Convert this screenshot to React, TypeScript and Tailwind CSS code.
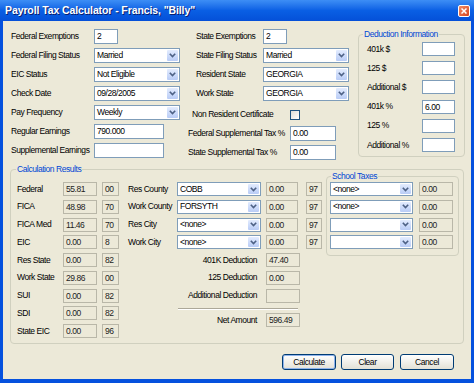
// Payroll Tax Calculator — XP style dialog
import type { ReactNode } from 'react'

const Chevron = () => (
  <svg width="7" height="5" viewBox="0 0 7 5">
    <path d="M0.8 0.8 L3.5 3.6 L6.2 0.8" fill="none" stroke="#4D6185" strokeWidth="1.6" />
  </svg>
)

interface BoxProps {
  value?: string
  w: string
}

const TextBox = ({ value = '', w }: BoxProps) => (
  <div className={['h-[15px] border border-[#7F9DB9] bg-white pl-[2px] leading-[13px]', w].join(' ')}>
    {value}
  </div>
)

const ComboBox = ({ value = '', w, h = 'h-[15px]' }: BoxProps & { h?: string }) => (
  <div className={['flex items-stretch border border-[#7F9DB9] bg-white', w, h].join(' ')}>
    <span className="flex flex-1 items-center truncate pl-[2px]">{value}</span>
    <span className="m-px flex w-[11px] items-center justify-center rounded-[1px] bg-gradient-to-b from-[#E3ECFE] to-[#B9CCF6]">
      <Chevron />
    </span>
  </div>
)

const ReadBox = ({ value = '', w }: BoxProps) => (
  <div className={['h-[14px] border border-[#B9B7A8] bg-[#ECE9D8] pl-[2px] leading-[12px] text-[#222]', w].join(' ')}>
    {value}
  </div>
)

const Legend = ({ children }: { children: ReactNode }) => (
  <legend className="ml-[4px] px-[1px] leading-[10px] text-[#0046D5]">{children}</legend>
)

const XpButton = ({ label, primary }: { label: string; primary?: boolean }) => (
  <button
    className={[
      'h-[16px] rounded-[3px] border border-[#003C74] bg-gradient-to-b from-white to-[#E3E1D6] leading-[12px]',
      label === 'Clear' ? 'w-[53px]' : 'w-[54px]',
      primary ? 'shadow-[inset_0_0_0_1px_#8FB3EB]' : '',
    ].join(' ')}
  >
    {label}
  </button>
)

const LEFT_ROWS: { label: string; control: ReactNode }[] = [
  { label: 'Federal Exemptions', control: <TextBox value="2" w="w-[24px]" /> },
  { label: 'Federal Filing Status', control: <ComboBox value="Married" w="w-[86px]" /> },
  { label: 'EIC Status', control: <ComboBox value="Not Eligible" w="w-[86px]" /> },
  { label: 'Check Date', control: <ComboBox value="09/28/2005" w="w-[86px]" /> },
  { label: 'Pay Frequency', control: <ComboBox value="Weekly" w="w-[86px]" /> },
  { label: 'Regular Earnings', control: <TextBox value="790.000" w="w-[70px]" /> },
  { label: 'Supplemental Earnings', control: <TextBox w="w-[70px]" /> },
]

const STATE_ROWS: { label: string; control: ReactNode }[] = [
  { label: 'State Exemptions', control: <TextBox value="2" w="w-[24px]" /> },
  { label: 'State Filing Status', control: <ComboBox value="Married" w="w-[86px]" /> },
  { label: 'Resident State', control: <ComboBox value="GEORGIA" w="w-[86px]" /> },
  { label: 'Work State', control: <ComboBox value="GEORGIA" w="w-[86px]" /> },
]

const DEDUCTIONS = [
  { label: '401k $', value: '' },
  { label: '125 $', value: '' },
  { label: 'Additional $', value: '' },
  { label: '401k %', value: '6.00' },
  { label: '125 %', value: '' },
  { label: 'Additional %', value: '' },
]

const RESULTS = [
  { label: 'Federal', amount: '55.81', code: '00' },
  { label: 'FICA', amount: '48.98', code: '70' },
  { label: 'FICA Med', amount: '11.46', code: '70' },
  { label: 'EIC', amount: '0.00', code: '8' },
  { label: 'Res State', amount: '0.00', code: '82' },
  { label: 'Work State', amount: '29.86', code: '00' },
  { label: 'SUI', amount: '0.00', code: '82' },
  { label: 'SDI', amount: '0.00', code: '82' },
  { label: 'State EIC', amount: '0.00', code: '96' },
]

const LOCALS = [
  { label: 'Res County', value: 'COBB' },
  { label: 'Work County', value: 'FORSYTH' },
  { label: 'Res City', value: '<none>' },
  { label: 'Work City', value: '<none>' },
]

const SCHOOLS = ['<none>', '<none>', '', '']

const EXTRA_DEDUCTIONS = [
  { label: '401K Deduction', value: '47.40' },
  { label: '125 Deduction', value: '0.00' },
  { label: 'Additional Deduction', value: '' },
]

export default function App() {
  return (
    <div className="flex h-[383px] w-[474px] flex-col whitespace-nowrap bg-[#0551DE] font-['Liberation_Sans',Arial,sans-serif] text-[8.5px] tracking-[-0.45px] text-black">
      {/* 타이틀 바 */}
      <div className="flex h-[21px] items-center justify-between bg-gradient-to-b from-[#3D8EF5] via-[#0A5FE4] to-[#0550D8] pl-[5px] pr-[4px]">
        <span className="text-[10.5px] font-bold tracking-[-0.1px] text-white [text-shadow:1px_1px_0_#0A1E6E]">
          Payroll Tax Calculator - Francis, "Billy"
        </span>
        <span className="flex h-[12px] w-[12px] items-center justify-center rounded-[2px] border border-white bg-gradient-to-br from-[#F08A64] to-[#D6431A]">
          <svg width="6" height="6" viewBox="0 0 6 6">
            <path d="M0.5 0.5 L5.5 5.5 M5.5 0.5 L0.5 5.5" stroke="white" strokeWidth="1.5" />
          </svg>
        </span>
      </div>

      {/* 본문 */}
      <div className="mx-[3px] mb-[4px] flex flex-1 flex-col bg-[#ECE9D8]">
        <div className="flex items-start pl-[8px] pt-[8px]">
          {/* 연방 */}
          <div className="flex w-[169px] flex-col gap-[4px]">
            {LEFT_ROWS.map((row) => (
              <div key={row.label} className="flex h-[15px] items-center">
                <span className="w-[83px] shrink-0">{row.label}</span>
                {row.control}
              </div>
            ))}
          </div>

          {/* 주 */}
          <div className="ml-[8px] flex w-[161px] flex-col gap-[4px]">
            {STATE_ROWS.map((row) => (
              <div key={row.label} className="flex h-[15px] items-center pl-[8px]">
                <span className="w-[67px] shrink-0">{row.label}</span>
                {row.control}
              </div>
            ))}
            <div className="mt-[2px] flex h-[15px] items-center pl-[4px]">
              <span className="w-[98px] shrink-0">Non Resident Certificate</span>
              <span className="h-[10px] w-[10px] border border-[#1C5180] bg-gradient-to-br from-[#DCDCD7] to-white" />
            </div>
            <div className="flex h-[15px] items-center">
              <span className="w-[102px] shrink-0">Federal Supplemental Tax %</span>
              <TextBox value="0.00" w="w-[46px]" />
            </div>
            <div className="flex h-[15px] items-center">
              <span className="w-[102px] shrink-0">State Supplemental Tax %</span>
              <TextBox value="0.00" w="w-[46px]" />
            </div>
          </div>

          {/* 공제 정보 */}
          <fieldset className="ml-[9px] w-[107px] rounded-[4px] border border-[#D0D0BF]">
            <Legend>Deduction Information</Legend>
            <div className="flex flex-col gap-[5.2px] pb-[4px] pl-[8px] pr-[9px] pt-[3px]">
              {DEDUCTIONS.map((d) => (
                <div key={d.label} className="flex h-[14px] items-center justify-between">
                  <span>{d.label}</span>
                  <div className="h-[14px] w-[33px] border border-[#7F9DB9] bg-white pl-[2px] leading-[12px]">
                    {d.value}
                  </div>
                </div>
              ))}
            </div>
          </fieldset>
        </div>

        {/* 계산 결과 */}
        <fieldset className="ml-[7px] mt-[4px] w-[454px] rounded-[4px] border border-[#D0D0BF]">
          <legend className="ml-[5px] px-[1px] leading-[10px] text-[#0046D5]">Calculation Results</legend>
          <div className="flex items-start pb-[5px] pl-[6px]">
            <div className="flex w-[102px] flex-col gap-[3.75px] pt-[8px]">
              {RESULTS.map((r) => (
                <div key={r.label} className="flex h-[14px] items-center">
                  <span className="w-[46px] shrink-0">{r.label}</span>
                  <ReadBox value={r.amount} w="w-[34px]" />
                  <div className="ml-[5px]">
                    <ReadBox value={r.code} w="w-[17px]" />
                  </div>
                </div>
              ))}
            </div>

            <div className="ml-[9px] flex w-[194px] flex-col pt-[8px]">
              <div className="flex flex-col gap-[3.75px]">
                {LOCALS.map((l) => (
                  <div key={l.label} className="flex h-[14px] items-center">
                    <span className="w-[49px] shrink-0">{l.label}</span>
                    <ComboBox value={l.value} w="w-[84px]" h="h-[14px]" />
                    <div className="ml-[5px]">
                      <ReadBox value="0.00" w="w-[32px]" />
                    </div>
                    <div className="ml-[8px]">
                      <ReadBox value="97" w="w-[16px]" />
                    </div>
                  </div>
                ))}
                {EXTRA_DEDUCTIONS.map((d) => (
                  <div key={d.label} className="flex h-[14px] items-center">
                    <span className="w-[129px] shrink-0 text-right">{d.label}</span>
                    <div className="ml-[9px]">
                      <ReadBox value={d.value} w="w-[34px]" />
                    </div>
                  </div>
                ))}
              </div>
              <div className="ml-[50px] mt-[5px] w-[120px] border-b border-t border-b-white border-t-[#ACA899]" />
              <div className="mt-[3px] flex h-[15px] items-center">
                <span className="w-[129px] shrink-0 text-right">Net Amount</span>
                <div className="ml-[9px]">
                  <ReadBox value="596.49" w="w-[34px]" />
                </div>
              </div>
            </div>

            {/* 학교세 */}
            <fieldset className="-mt-[3px] ml-[4px] w-[133px] rounded-[4px] border border-[#D0D0BF]">
              <Legend>School Taxes</Legend>
              <div className="flex flex-col gap-[3.75px] pb-[6px] pl-[3px] pt-[1px]">
                {SCHOOLS.map((s, i) => (
                  <div key={i} className="flex h-[14px] items-center">
                    <ComboBox value={s} w="w-[83px]" h="h-[14px]" />
                    <div className="ml-[6px]">
                      <ReadBox value="0.00" w="w-[34px]" />
                    </div>
                  </div>
                ))}
              </div>
            </fieldset>
          </div>
        </fieldset>

        {/* 버튼 */}
        <div className="mt-[10px] flex justify-end gap-[5px] pr-[17px]">
          <XpButton label="Calculate" primary />
          <XpButton label="Clear" />
          <div className="ml-px">
            <XpButton label="Cancel" />
          </div>
        </div>
      </div>
    </div>
  )
}
